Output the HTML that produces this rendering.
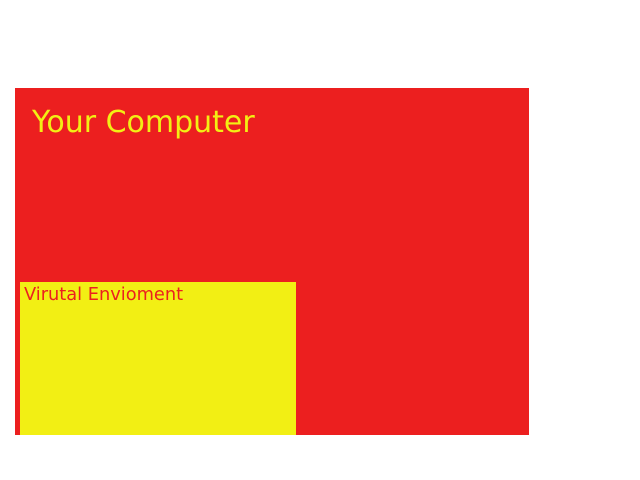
<!DOCTYPE html>
<html><head><style>
html,body{margin:0;padding:0;width:640px;height:480px;background:#fff;overflow:hidden;font-family:"DejaVu Sans",sans-serif}
#r{position:absolute;left:15px;top:88px;width:514px;height:347px;background:#ec1f1f}
#t{position:absolute;left:32px;top:105px;font-size:30px;line-height:35px;color:#f2ef14;white-space:nowrap}
#y{position:absolute;left:20px;top:282px;width:276px;height:153px;background:#f2ef14}
#v{position:absolute;left:24px;top:285px;font-size:17.8px;line-height:20px;color:#ec1f1f;white-space:nowrap}
</style></head><body>
<div id="r"></div><div id="t">Your Computer</div>
<div id="y"></div><div id="v">Virutal Envioment</div>
</body></html>
